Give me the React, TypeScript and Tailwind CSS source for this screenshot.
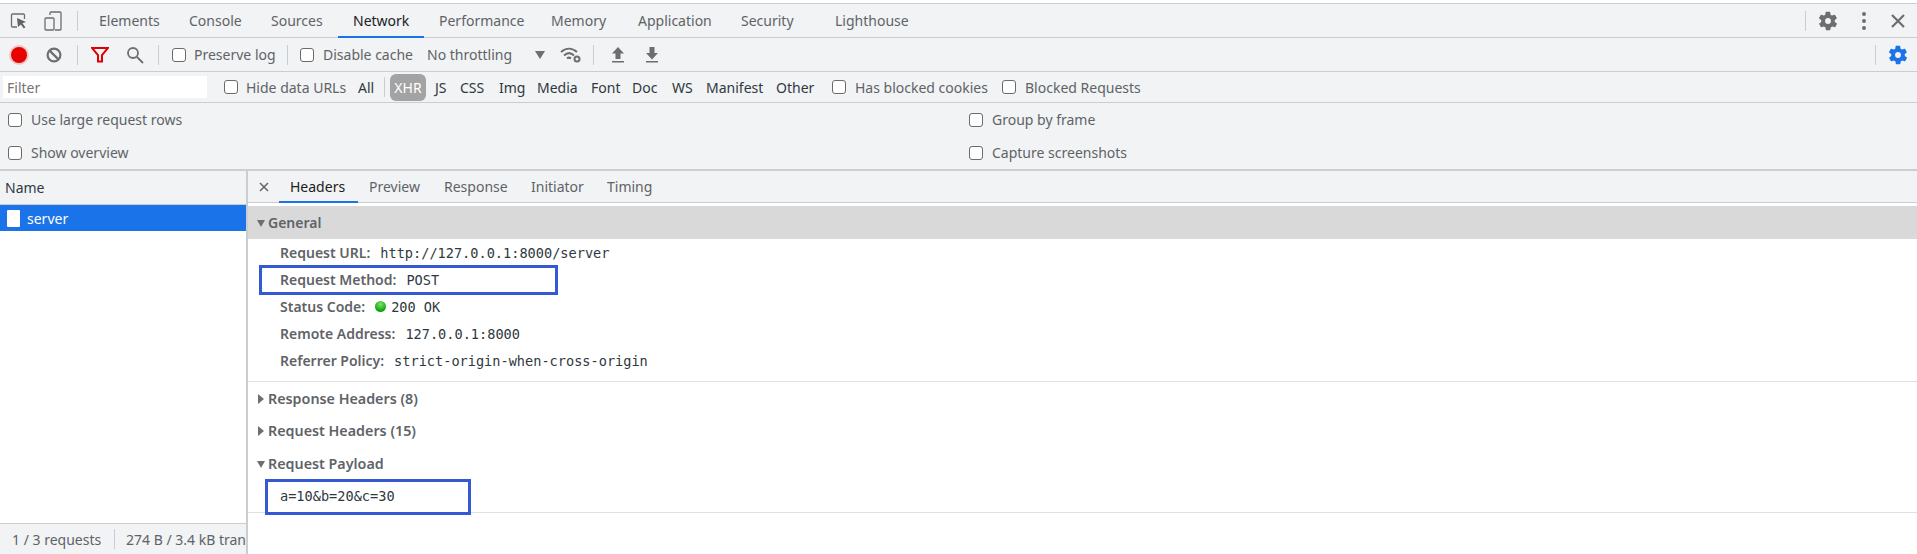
import React from 'react';

const ui = "font-['Noto_Sans','Open_Sans',sans-serif]";
const mono = "font-['DejaVu_Sans_Mono',monospace] text-[13.6px] leading-[18px] text-[#303942]";

const Sep = ({ className }: { className: string }) => <div className={`w-px h-[20px] bg-[#cbcdd1] ${className}`} />;

const Check = ({ className = '' }: { className?: string }) => (
    <span className={`block w-[14px] h-[14px] rounded-[3px] border border-[#6b6b6b] bg-white shrink-0 ${className}`} />
);

const Gear = ({ color }: { color: string }) => (
    <svg width="22" height="22" viewBox="0 0 24 24" fill={color}>
        <path d="M19.4 13a7.5 7.5 0 0 0 0-2l2.1-1.6a.5.5 0 0 0 .1-.7l-2-3.4a.5.5 0 0 0-.6-.2l-2.5 1a7.3 7.3 0 0 0-1.7-1l-.4-2.7a.5.5 0 0 0-.5-.4h-4a.5.5 0 0 0-.5.4l-.4 2.7a7.3 7.3 0 0 0-1.7 1l-2.5-1a.5.5 0 0 0-.6.2l-2 3.4a.5.5 0 0 0 .1.7L4.6 11a7.5 7.5 0 0 0 0 2l-2.1 1.6a.5.5 0 0 0-.1.7l2 3.4a.5.5 0 0 0 .6.2l2.5-1a7.3 7.3 0 0 0 1.7 1l.4 2.7a.5.5 0 0 0 .5.4h4a.5.5 0 0 0 .5-.4l.4-2.7a7.3 7.3 0 0 0 1.7-1l2.5 1a.5.5 0 0 0 .6-.2l2-3.4a.5.5 0 0 0-.1-.7zM12 15.2a3.2 3.2 0 1 1 0-6.4 3.2 3.2 0 0 1 0 6.4z" />
    </svg>
);

const Triangle = ({ open }: { open: boolean }) => (
    <svg width="8" height="10" viewBox="0 0 8 10" className="shrink-0" fill="#6e6e6e">
        {open ? <path d="M0 2h8L4 9z" /> : <path d="M1 0l6 5-6 5z" />}
    </svg>
);

const tabs = [
    { label: 'Elements', w: 'w-[90px]' },
    { label: 'Console', w: 'w-[82px]' },
    { label: 'Sources', w: 'w-[82px]' },
    { label: 'Network', w: 'w-[86px]', active: true },
    { label: 'Performance', w: 'w-[112px]' },
    { label: 'Memory', w: 'w-[87px]' },
    { label: 'Application', w: 'w-[103px]' },
    { label: 'Security', w: 'w-[94px]' },
    { label: 'Lighthouse', w: 'w-[90px]' },
];

const types = [
    { label: 'JS', w: 'w-[25px]' },
    { label: 'CSS', w: 'w-[39px]' },
    { label: 'Img', w: 'w-[38px]' },
    { label: 'Media', w: 'w-[54px]' },
    { label: 'Font', w: 'w-[41px]' },
    { label: 'Doc', w: 'w-[40px]' },
    { label: 'WS', w: 'w-[34px]' },
    { label: 'Manifest', w: 'w-[70px]' },
    { label: 'Other', w: 'w-[55px]' },
];

const detailTabs = [
    { label: 'Preview', w: 'w-[75px]' },
    { label: 'Response', w: 'w-[87px]' },
    { label: 'Initiator', w: 'w-[76px]' },
    { label: 'Timing', w: 'w-[60px]' },
];

const Row = ({ label, children }: { label: string; children: React.ReactNode }) => (
    <div className="h-[27px] flex items-center pl-[32px]">
        <span className="font-semibold text-[14px] leading-[18px] text-[#5f6368] mr-[10px] whitespace-nowrap">{label}</span>
        {children}
    </div>
);

export default function App() {
    return (
        <div className={`w-[1917px] h-[554px] overflow-hidden bg-white flex flex-col text-[14px] text-[#5f6368] ${ui}`}>
            <div className="h-[3px] bg-white shrink-0" />
            {/* main tabs */}
            <div className="h-[35px] shrink-0 bg-[#f1f3f4] border-t border-b border-[#cbcdd1] flex items-center relative">
                <svg width="18" height="18" viewBox="0 0 18 18" className="ml-[10px] shrink-0" fill="none">
                    <path d="M7 15H2.5a1 1 0 0 1-1-1V3a1 1 0 0 1 1-1h11a1 1 0 0 1 1 1v4" stroke="#6e6e6e" strokeWidth="1.3" />
                    <path d="M7 6l9 4-3.6 1.2 3 4-1.6 1.2-2.9-4L8 15z" fill="#5f6368" />
                </svg>
                <svg width="20" height="20" viewBox="0 0 20 20" className="ml-[15px] shrink-0" fill="none" stroke="#6e6e6e" strokeWidth="1.3">
                    <path d="M7 4V2a1 1 0 0 1 1-1h9a1 1 0 0 1 1 1v16a1 1 0 0 1-1 1h-5" />
                    <rect x="2" y="7" width="9" height="12" rx="1" />
                </svg>
                <Sep className="ml-[14px] mr-[21px] shrink-0" />
                <div className="flex h-full">
                    {tabs.map((t) => (
                        <div key={t.label} className={`${t.w} h-full relative flex items-center whitespace-nowrap ${t.active ? 'text-[#202124]' : ''}`}>
                            {t.label}
                            {t.active && <span className="absolute left-[-15px] w-[86px] bottom-[-1px] h-[2px] bg-[#1a73e8]" />}
                        </div>
                    ))}
                </div>
                <div className="ml-auto flex items-center h-full">
                    <Sep className="mr-[11px]" />
                    <Gear color="#6e6e6e" />
                    <svg width="6" height="20" viewBox="0 0 6 20" className="ml-[22px]" fill="#6e6e6e">
                        <circle cx="3" cy="3" r="2" /><circle cx="3" cy="10" r="2" /><circle cx="3" cy="17" r="2" />
                    </svg>
                    <svg width="14" height="14" viewBox="0 0 14 14" className="ml-[24px] mr-[12px]" stroke="#6e6e6e" strokeWidth="2.2">
                        <path d="M1 1l12 12M13 1L1 13" />
                    </svg>
                </div>
            </div>
            {/* toolbar */}
            <div className="h-[34px] shrink-0 bg-[#f1f3f4] border-b border-[#cbcdd1] flex items-center">
                <span className="ml-[11px] w-[16px] h-[16px] rounded-full bg-[#e60000] shadow-[0_0_0_2px_#f3c6c6] shrink-0" />
                <svg width="16" height="16" viewBox="0 0 16 16" className="ml-[19px] shrink-0" fill="none" stroke="#6e6e6e" strokeWidth="2.2">
                    <circle cx="8" cy="8" r="6.4" /><path d="M3.6 3.6l8.8 8.8" />
                </svg>
                <Sep className="ml-[15px] shrink-0" />
                <svg width="18" height="16" viewBox="0 0 18 16" className="ml-[13px] shrink-0" fill="none" stroke="#e00000" strokeWidth="2">
                    <path d="M1 1h16l-6 7v6.5H7V8z" />
                </svg>
                <svg width="18" height="18" viewBox="0 0 18 18" className="ml-[17px] shrink-0" fill="none" stroke="#6e6e6e" strokeWidth="1.8">
                    <circle cx="7" cy="7" r="5" /><path d="M11 11l6 6" />
                </svg>
                <Sep className="ml-[14px] shrink-0" />
                <Check className="ml-[13px]" />
                <span className="ml-[8px] w-[93px] whitespace-nowrap">Preserve log</span>
                <Sep className="shrink-0" />
                <Check className="ml-[12px]" />
                <span className="ml-[9px] w-[104px] whitespace-nowrap">Disable cache</span>
                <span className="w-[108px] whitespace-nowrap">No throttling</span>
                <svg width="10" height="8" viewBox="0 0 10 8" fill="#6e6e6e" className="shrink-0"><path d="M0 0h10L5 8z" /></svg>
                <svg width="22" height="16" viewBox="0 0 22 16" className="ml-[15px] shrink-0" fill="none" stroke="#6e6e6e" strokeWidth="2">
                    <path d="M1 5c5-4.500 11-4.500 16 0M4 8.500c3.200-3 7-3 10 0M7 11.500c1.400-1.200 2.600-1.200 4 0" />
                    <circle cx="17" cy="12" r="2.500" strokeWidth="2" />
                </svg>
                <Sep className="ml-[11px] shrink-0" />
                <svg width="14" height="16" viewBox="0 0 14 16" className="ml-[17px] shrink-0" fill="#6e6e6e"><path d="M7 0l6 6.500H9.500V12h-5V6.500H1zM1 14h12v1.600H1z" /></svg>
                <svg width="14" height="16" viewBox="0 0 14 16" className="ml-[20px] shrink-0" fill="#6e6e6e"><path d="M4.500 0h5v6H13l-6 6.500L1 6H4.500zM1 14h12v1.600H1z" /></svg>
                <div className="ml-auto flex items-center">
                    <Sep className="mr-[11px]" />
                    <span className="mr-[8px] flex"><Gear color="#1a73e8" /></span>
                </div>
            </div>
            {/* filter row */}
            <div className="h-[31px] shrink-0 bg-[#f1f3f4] border-b border-[#cbcdd1] flex items-center">
                <div className="ml-[3px] w-[204px] h-[22px] bg-white pl-[4px] flex items-center text-[#757575]">Filter</div>
                <Check className="ml-[17px]" />
                <span className="ml-[8px] w-[112px] whitespace-nowrap">Hide data URLs</span>
                <span className="w-[26px] text-[#303942]">All</span>
                <Sep className="shrink-0" />
                <span className="ml-[5px] w-[36px] h-[27px] rounded-[6px] bg-[#a3a3a3] text-white flex items-center justify-center shrink-0">XHR</span>
                <div className="flex ml-[9px] text-[#303942]">
                    {types.map((t) => (
                        <span key={t.label} className={`${t.w} whitespace-nowrap`}>{t.label}</span>
                    ))}
                </div>
                <Check className="ml-[1px]" />
                <span className="ml-[9px] w-[147px] whitespace-nowrap">Has blocked cookies</span>
                <Check />
                <span className="ml-[9px] whitespace-nowrap">Blocked Requests</span>
            </div>
            {/* settings */}
            <div className="h-[67px] shrink-0 bg-[#f1f3f4] border-b border-[#cbcdd1] grid grid-cols-[961px_1fr] grid-rows-2 items-center pl-[8px]">
                <div className="flex items-center gap-[9px]"><Check />Use large request rows</div>
                <div className="flex items-center gap-[9px]"><Check />Group by frame</div>
                <div className="flex items-center gap-[9px]"><Check />Show overview</div>
                <div className="flex items-center gap-[9px]"><Check />Capture screenshots</div>
            </div>
            {/* body */}
            <div className="flex-1 flex min-h-0 border-t border-[#cbcdd1]">
                <div className="w-[246px] shrink-0 flex flex-col border-r-2 border-[#cbcdd1] box-content">
                    <div className="h-[34px] shrink-0 bg-[#f1f3f4] border-b border-[#cbcdd1] pl-[5px] flex items-center text-[#303942]">Name</div>
                    <div className="h-[26px] shrink-0 bg-[#1a73e8] text-white flex items-center pl-[7px]">
                        <span className="w-[13px] h-[17px] bg-white rounded-[1px] mr-[7px]" />server
                    </div>
                    <div className="flex-1" />
                    <div className="h-[31px] shrink-0 bg-[#f1f3f4] border-t border-[#cbcdd1] flex items-center overflow-hidden whitespace-nowrap pl-[12px]">
                        <span className="w-[102px] shrink-0">1 / 3 requests</span>
                        <Sep className="shrink-0 mr-[11px]" />
                        <span>274 B / 3.4 kB transferred</span>
                    </div>
                </div>
                <div className="flex-1 min-w-0 flex flex-col">
                    {/* detail tabs */}
                    <div className="h-[32px] shrink-0 bg-[#f1f3f4] border-b border-[#cbcdd1] flex items-center">
                        <svg width="10" height="10" viewBox="0 0 10 10" className="ml-[11px] shrink-0" stroke="#5f6368" strokeWidth="1.5"><path d="M1 1l8 8M9 1L1 9" /></svg>
                        <div className="ml-[10px] w-[79px] h-full relative flex items-center pl-[11px] text-[#202124]">
                            Headers
                            <span className="absolute left-0 right-0 bottom-[-1px] h-[2px] bg-[#1a73e8]" />
                        </div>
                        <div className="ml-[11px] flex">
                            {detailTabs.map((t) => (
                                <span key={t.label} className={`${t.w} whitespace-nowrap`}>{t.label}</span>
                            ))}
                        </div>
                    </div>
                    <div className="h-[3px] shrink-0" />
                    <div className="h-[33px] shrink-0 bg-[#d9d9d9] flex items-center pl-[9px] gap-[3px] font-semibold">
                        <Triangle open />
                        General
                    </div>
                    <div className="border-b border-[#e0e0e0] h-[143px] shrink-0">
                        <Row label="Request URL:"><span className={mono}>http://127.0.0.1:8000/server</span></Row>
                        <div className="relative">
                            <Row label="Request Method:"><span className={mono}>POST</span></Row>
                            <span className="absolute left-[11px] top-[-1px] w-[299px] h-[30px] border-[3px] border-[#3558d4]" />
                        </div>
                        <Row label="Status Code:">
                            <span className="w-[11px] h-[11px] rounded-full bg-[radial-gradient(circle_at_50%_30%,#7fe36f,#0ea30e_70%)] mr-[5px]" />
                            <span className={mono}>200 OK</span>
                        </Row>
                        <Row label="Remote Address:"><span className={mono}>127.0.0.1:8000</span></Row>
                        <Row label="Referrer Policy:"><span className={mono}>strict-origin-when-cross-origin</span></Row>
                    </div>
                    <div className="h-[33px] shrink-0 flex items-center pl-[9px] gap-[3px] font-semibold text-[14.3px]">
                        <Triangle open={false} />Response Headers (8)
                    </div>
                    <div className="h-[32px] shrink-0 flex items-center pl-[9px] gap-[3px] font-semibold text-[14.3px]">
                        <Triangle open={false} />Request Headers (15)
                    </div>
                    <div className="h-[33px] shrink-0 flex items-center pl-[9px] gap-[3px] font-semibold text-[14.3px]">
                        <Triangle open />Request Payload
                    </div>
                    <div className="relative h-[33px] shrink-0 border-b border-[#e0e0e0] flex items-center pl-[32px]">
                        <span className={mono}>a=10&amp;b=20&amp;c=30</span>
                        <span className="absolute left-[17px] top-[-1px] w-[206px] h-[36px] border-[3px] border-[#3558d4]" />
                    </div>
                </div>
            </div>
        </div>
    );
}
